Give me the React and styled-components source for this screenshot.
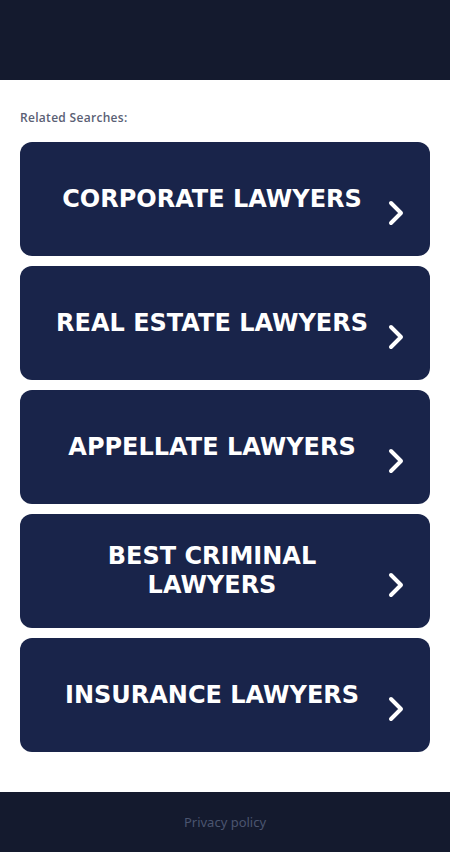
import React from "react";
import styled, { createGlobalStyle } from "styled-components";

const Global = createGlobalStyle`
  html, body { margin: 0; padding: 0; background: #ffffff; }
  * { box-sizing: border-box; }
`;

const Page = styled.div`
  display: flex;
  flex-direction: column;
  min-height: 852px;
`;

const Header = styled.header`
  height: 80px;
  background: #141a2e;
`;

const Main = styled.main`
  flex: 1;
  padding: 30px 20px 40px;
  display: flex;
  flex-direction: column;
`;

const Label = styled.div`
  font-family: "Open Sans", "Noto Sans", sans-serif;
  font-size: 12px;
  font-weight: 600;
  letter-spacing: 0.3px;
  color: #5a6074;
  line-height: 16px;
  margin-bottom: 16px;
`;

const List = styled.div`
  display: flex;
  flex-direction: column;
  gap: 10px;
`;

const Item = styled.a`
  position: relative;
  display: flex;
  align-items: center;
  justify-content: center;
  height: 114px;
  padding: 0 50px 0 24px;
  background: #19244a;
  border-radius: 12px;
  text-decoration: none;
  cursor: pointer;
`;

const ItemText = styled.span`
  font-family: "DejaVu Sans", sans-serif;
  font-weight: 700;
  font-size: 24px;
  line-height: 29px;
  color: #ffffff;
  text-align: center;
  text-transform: uppercase;
`;

const Chevron = styled.svg`
  position: absolute;
  right: 25px;
  top: 57px;
  width: 18px;
  height: 28px;
`;

const Footer = styled.footer`
  height: 60px;
  background: #141a2e;
  display: flex;
  align-items: center;
  justify-content: center;
`;

const FooterLink = styled.a`
  font-family: "Noto Sans", "Open Sans", sans-serif;
  font-size: 13px;
  color: #4b5570;
  text-decoration: none;
`;

const items = [
  "Corporate Lawyers",
  "Real Estate Lawyers",
  "Appellate Lawyers",
  "Best Criminal Lawyers",
  "Insurance Lawyers",
];

export default function App() {
  return (
    <>
      <Global />
      <Page>
        <Header />
        <Main>
          <Label>Related Searches:</Label>
          <List>
            {items.map((t) => (
              <Item key={t}>
                <ItemText>{t}</ItemText>
                <Chevron viewBox="0 0 18 28" fill="none">
                  <polyline
                    points="4,4 14,14 4,24"
                    stroke="#ffffff"
                    strokeWidth="4"
                    strokeLinecap="round"
                    strokeLinejoin="round"
                  />
                </Chevron>
              </Item>
            ))}
          </List>
        </Main>
        <Footer>
          <FooterLink>Privacy policy</FooterLink>
        </Footer>
      </Page>
    </>
  );
}
